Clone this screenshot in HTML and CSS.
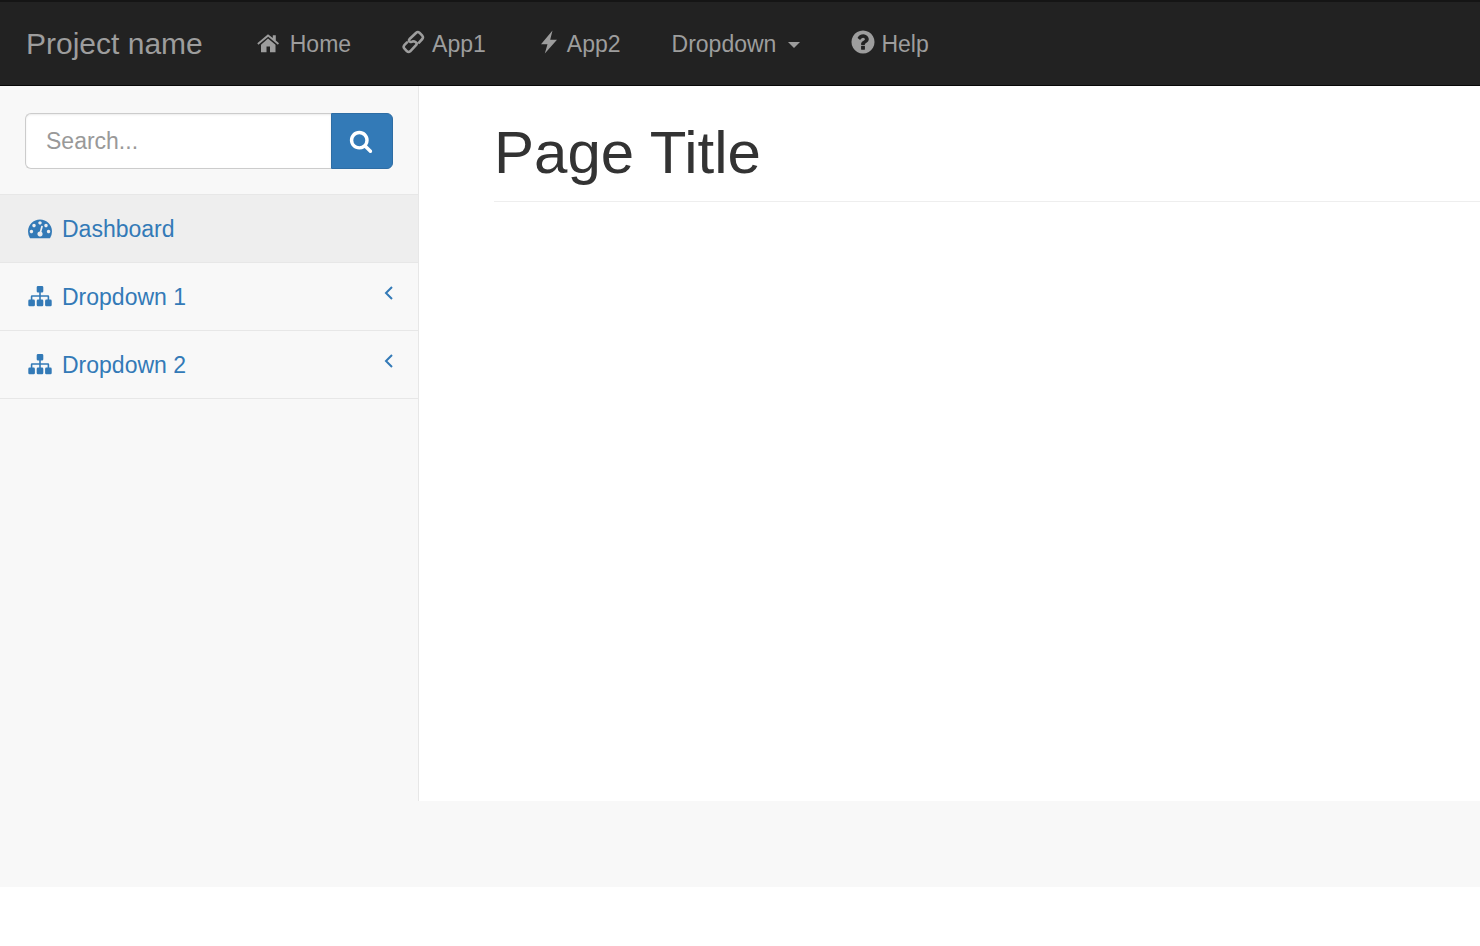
FILE: index.html
```html
<!DOCTYPE html>
<html lang="en">
<head>
<meta charset="utf-8">
<title>Page Title</title>
<link rel="stylesheet" href="styles.css">
</head>
<body>
<nav class="navbar">
  <a class="brand" href="#">Project name</a>
  <a class="nav-link nav-home" href="#"><svg class="icon" viewBox="0 0 24 24"><path d="M12 7.500L19.500 13.700V21.200H14V15.500H10.500V21.200H5V13.700Z"/><path d="M12 3.200L16.800 7.100V4.200H19.800V9.600L23 12.300L21.900 13.700L12.200 5.700L2.400 13.700L1.300 12.300Z"/></svg>Home</a>
  <a class="nav-link" href="#"><svg class="icon" viewBox="0 0 24 24"><path fill="none" stroke="currentColor" stroke-width="2.600" stroke-linecap="round" stroke-linejoin="round" d="M17 12.600L20.300 9Q21.600 7.300 20.300 5.700L17.400 2.700Q15.800 1.300 14.200 2.700L7.600 9Q6.200 10.700 8 11.700Q9.500 12.400 11 11.200Q12.500 11.200 13.800 12.200Q15.400 13.600 14 15.200L8.200 21.300Q6.600 22.700 5 21.300L2.300 18.400Q1 16.800 2.300 15.200L5 12.400"/></svg>App1</a>
  <a class="nav-link" href="#"><svg class="icon" viewBox="0 0 24 24"><path d="M15.500 0.500L4 14.200H10.500L7.800 23.500L20 9.800H13.200Z"/></svg>App2</a>
  <a class="nav-link" href="#">Dropdown<span class="caret"></span></a>
  <a class="nav-link" href="#"><svg class="icon" viewBox="96 96 1600 1600"><path d="M1024 1376v-192q0-14-9-23t-23-9h-192q-14 0-23 9t-9 23v192q0 14 9 23t23 9h192q14 0 23-9t9-23zm256-672q0-88-55.500-163t-138.500-116-170-41q-243 0-371 213-15 24 8 42l132 100q7 6 19 6 16 0 25-12 53-68 86-92 34-24 86-24 48 0 85.500 26t37.500 59q0 38-20 61t-68 45q-63 28-115.500 86.500t-52.500 125.500v36q0 14 9 23t23 9h192q14 0 23-9t9-23q0-19 21.500-49.500t54.500-49.500q32-18 49-28.500t46-35 44.500-48 28-60.500 12.500-81zm384 192q0 209-103 385.500t-279.500 279.500-385.500 103-385.500-103-279.500-279.500-103-385.500 103-385.500 279.500-279.500 385.500-103 385.500 103 279.500 279.500 103 385.500z"/></svg>Help</a>
</nav>
<div class="layout">
  <aside class="sidebar">
    <form class="search">
      <input class="search-input" type="text" placeholder="Search..." aria-label="Search">
      <button class="search-button" type="button" aria-label="Search"><svg class="search-icon" viewBox="0 0 1792 1792"><path d="M1216 832q0-185-131.500-316.500t-316.500-131.500-316.500 131.500-131.500 316.500 131.500 316.500 316.500 131.500 316.500-131.500 131.500-316.500zm512 832q0 52-38 90t-90 38q-54 0-90-38l-343-342q-179 124-399 124-143 0-273.500-55.500t-225-150-150-225-55.500-273.500 55.500-273.500 150-225 225-150 273.500-55.500 273.500 55.500 225 150 150 225 55.500 273.500q0 220-124 399l343 343q37 37 37 90z"/></svg></button>
    </form>
    <ul class="menu">
      <li><a class="menu-link active" href="#"><svg class="icon" viewBox="0 0 1792 1792"><path d="M384 1152q0-53-37.500-90.500t-90.500-37.500-90.500 37.500-37.500 90.500 37.500 90.500 90.500 37.500 90.500-37.500 37.500-90.500zm192-448q0-53-37.500-90.500t-90.500-37.500-90.500 37.500-37.500 90.500 37.500 90.500 90.500 37.500 90.500-37.500 37.500-90.500zm428 481l101-382q6-26-7.500-48.500t-38.500-29.500-48 6.500-30 39.500l-101 382q-60 5-107 43.500t-63 98.500q-20 77 20 146t117 89 146-20 89-117q16-60-6-117t-72-91zm660-33q0-53-37.500-90.500t-90.500-37.500-90.500 37.500-37.500 90.500 37.500 90.500 90.500 37.500 90.500-37.500 37.500-90.500zm-640-640q0-53-37.500-90.500t-90.500-37.500-90.500 37.500-37.500 90.500 37.500 90.500 90.500 37.500 90.500-37.500 37.500-90.500zm448 192q0-53-37.500-90.500t-90.500-37.500-90.500 37.500-37.500 90.500 37.500 90.500 90.500 37.500 90.500-37.500 37.500-90.500zm320 448q0 261-141 483-19 29-54 29h-1402q-35 0-54-29-141-221-141-483 0-182 71-348t191-286 286-191 348-71 348 71 286 191 191 286 71 348z"/></svg>Dashboard</a></li>
      <li><a class="menu-link" href="#"><svg class="icon" viewBox="0 0 24 24"><path d="M10 2h4q1.300 0 1.300 1.300v4q0 1.300-1.300 1.300h-1.200v2.600h7.200q1.200 0 1.200 1.200v3.200h1.200q1.300 0 1.300 1.300v4q0 1.300-1.300 1.300h-4q-1.300 0-1.300-1.300v-4q0-1.300 1.300-1.300h1.200v-2.800h-6.800v2.800h1.200q1.300 0 1.300 1.300v4q0 1.300-1.300 1.300h-4q-1.300 0-1.300-1.300v-4q0-1.300 1.300-1.300h1.200v-2.800h-6.800v2.800h1.200q1.300 0 1.300 1.300v4q0 1.300-1.300 1.300h-4q-1.300 0-1.300-1.300v-4q0-1.300 1.300-1.300h1.200v-3.200q0-1.200 1.200-1.200h7.200v-2.600h-1.200q-1.300 0-1.300-1.300v-4q0-1.300 1.300-1.300z"/></svg>Dropdown 1<svg class="angle" viewBox="0 0 10 16"><path d="M8 2L2 8L8 14"/></svg></a></li>
      <li><a class="menu-link" href="#"><svg class="icon" viewBox="0 0 24 24"><path d="M10 2h4q1.300 0 1.300 1.300v4q0 1.300-1.300 1.300h-1.200v2.600h7.200q1.200 0 1.200 1.200v3.200h1.200q1.300 0 1.300 1.300v4q0 1.300-1.300 1.300h-4q-1.300 0-1.300-1.300v-4q0-1.300 1.300-1.300h1.200v-2.800h-6.800v2.800h1.200q1.300 0 1.300 1.300v4q0 1.300-1.300 1.300h-4q-1.300 0-1.300-1.300v-4q0-1.300 1.300-1.300h1.200v-2.800h-6.800v2.800h1.200q1.300 0 1.300 1.300v4q0 1.300-1.300 1.300h-4q-1.300 0-1.300-1.300v-4q0-1.300 1.300-1.300h1.200v-3.200q0-1.200 1.200-1.200h7.200v-2.600h-1.200q-1.300 0-1.300-1.300v-4q0-1.300 1.300-1.300z"/></svg>Dropdown 2<svg class="angle" viewBox="0 0 10 16"><path d="M8 2L2 8L8 14"/></svg></a></li>
    </ul>
  </aside>
  <main class="content">
    <h1 class="page-title">Page Title</h1>
  </main>
</div>
<footer class="footer"></footer>
</body>
</html>
```
FILE: styles.css
```css
* {
  box-sizing: border-box;
}

body {
  margin: 0;
  min-height: 100vh;
  display: flex;
  flex-direction: column;
  padding-bottom: 59px;
  background: #fff;
  color: #333;
  font: 23px/34px "Liberation Sans", Arial, sans-serif;
}

a {
  text-decoration: none;
}

.navbar {
  display: flex;
  align-items: center;
  gap: 51px;
  padding: 25px 26px 24px;
  background: #222;
  border-top: 2px solid #151515;
  border-bottom: 1px solid #080808;
  color: #9d9d9d;
}

.brand {
  margin-right: 2px;
  color: inherit;
  font-size: 30px;
}

.nav-link {
  display: flex;
  align-items: center;
  gap: 6px;
  color: inherit;
}

.nav-home {
  gap: 10px;
}

.icon {
  width: 24px;
  height: 24px;
  margin-bottom: 2px;
  flex: none;
  fill: currentColor;
}

.nav-link .icon {
  margin-bottom: 4px;
}

.nav-home .icon {
  margin-bottom: 2px;
}

.caret {
  margin: 2px 0 0 6px;
  border: 6px solid transparent;
  border-top-color: currentColor;
  border-bottom: 0;
}

.layout {
  display: flex;
  flex: 1;
}

.sidebar {
  width: 419px;
  flex: none;
  background: #f8f8f8;
  border-right: 1px solid #e7e7e7;
}

.search {
  display: flex;
  padding: 27px 25px 25px;
  border-bottom: 1px solid #e7e7e7;
}

.search-input {
  flex: 1;
  min-width: 0;
  height: 56px;
  padding: 0 20px;
  border: 1px solid #ccc;
  border-right: 0;
  border-radius: 6px 0 0 6px;
  background: #fff;
  box-shadow: inset 0 1px 2px rgba(0, 0, 0, .08);
  color: #555;
  font: inherit;
}

.search-input::placeholder {
  color: #999;
  opacity: 1;
}

.search-button {
  display: flex;
  align-items: center;
  justify-content: center;
  width: 62px;
  padding: 0 2px 0 0;
  border: 1px solid #2e6da4;
  border-radius: 0 6px 6px 0;
  background: #337ab7;
  color: #fff;
}

.search-icon {
  width: 24px;
  height: 24px;
  fill: currentColor;
}

.menu {
  margin: 0;
  padding: 0;
  list-style: none;
}

.menu-link {
  display: flex;
  align-items: center;
  gap: 10px;
  padding: 17px 24px 16px 28px;
  border-bottom: 1px solid #e7e7e7;
  color: #337ab7;
}

.active {
  background: #eee;
}

.angle {
  width: 10px;
  height: 16px;
  margin: 0 0 8px auto;
  fill: none;
  stroke: currentColor;
  stroke-width: 2;
}

.content {
  flex: 1;
  min-width: 0;
  padding: 33px 0 0 75px;
}

.page-title {
  margin: 0;
  padding-bottom: 14px;
  border-bottom: 1px solid #eee;
  font-size: 60px;
  line-height: 68px;
  font-weight: 400;
}

.footer {
  height: 86px;
  background: #f8f8f8;
}
```
